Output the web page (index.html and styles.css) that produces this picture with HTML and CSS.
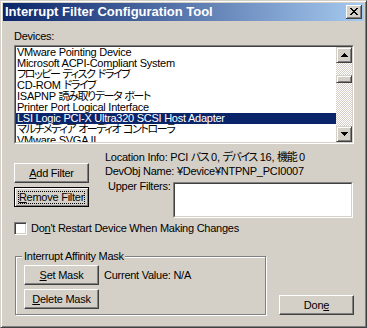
FILE: index.html
```html
<!DOCTYPE html>
<html lang="ja">
<head>
<meta charset="utf-8">
<title>Interrupt Filter Configuration Tool</title>
<link rel="stylesheet" href="styles.css">
</head>
<body>
<div class="window">
  <div class="titlebar">
    <span class="title">Interrupt Filter Configuration Tool</span>
    <span class="close"><svg width="8" height="7" viewBox="0 0 8 7" shape-rendering="crispEdges"><path d="M0 0h2v1H0zM6 0h2v1H6zM1 1h2v1H1zM5 1h2v1H5zM2 2h4v1H2zM3 3h2v1H3zM2 4h4v1H2zM1 5h2v1H1zM5 5h2v1H5zM0 6h2v1H0zM6 6h2v1H6z" fill="#000"/></svg></span>
  </div>
  <div class="client">
    <div class="label">Devices:</div>
    <div class="listbox">
      <div class="listbox-inner">
        <div class="items">
          <div class="item">VMware Pointing Device</div>
          <div class="item">Microsoft ACPI-Compliant System</div>
          <div class="item"><span class="ja">フロッピー</span> <span class="ja">ディスク</span> <span class="ja">ドライブ</span></div>
          <div class="item">CD-ROM <span class="ja">ドライブ</span></div>
          <div class="item">ISAPNP <span class="ja">読み取りデータ</span> <span class="ja">ポート</span></div>
          <div class="item">Printer Port Logical Interface</div>
          <div class="item selected">LSI Logic PCI-X Ultra320 SCSI Host Adapter</div>
          <div class="item"><span class="ja">マルチメディア</span> <span class="ja">オーディオ</span> <span class="ja">コントローラ</span></div>
          <div class="item">VMware SVGA II</div>
        </div>
        <div class="vscroll">
          <div class="sbtn"><svg width="7" height="4" viewBox="0 0 7 4" shape-rendering="crispEdges"><path d="M3 0h1v1H3zM2 1h3v1H2zM1 2h5v1H1zM0 3h7v1H0z" fill="#000"/></svg></div>
          <div class="track"><div class="thumb"></div></div>
          <div class="sbtn"><svg width="7" height="4" viewBox="0 0 7 4" shape-rendering="crispEdges"><path d="M0 0h7v1H0zM1 1h5v1H1zM2 2h3v1H2zM3 3h1v1H3z" fill="#000"/></svg></div>
        </div>
      </div>
    </div>
    <div class="mid">
      <div class="btncol">
        <button class="btn"><span class="cap"><u>A</u>dd Filter</span></button>
        <button class="btn focused"><span class="cap"><u>R</u>emove Filter</span></button>
      </div>
      <div class="info">
        <div class="line">Location Info: PCI <span class="ja">バス</span> 0, <span class="ja">デバイス</span> 16, <span class="ja">機能</span> 0</div>
        <div class="line">DevObj Name: ¥Device¥NTPNP_PCI0007</div>
        <div class="upper">
          <span class="upper-label">Upper Filters:</span>
          <div class="field"><div class="field-inner"></div></div>
        </div>
      </div>
    </div>
    <div class="check">
      <span class="box"></span>
      <span class="check-label">Do<u>n</u>'t Restart Device When Making Changes</span>
    </div>
    <div class="bottom">
      <div class="group">
        <span class="group-title">Interrupt Affinity Mask</span>
        <div class="grow">
          <button class="btn"><span class="cap"><u>S</u>et Mask</span></button>
          <span class="current">Current Value: N/A</span>
        </div>
        <button class="btn"><span class="cap"><u>D</u>elete Mask</span></button>
      </div>
      <button class="btn"><span class="cap">Don<u>e</u></span></button>
    </div>
  </div>
</div>
</body>
</html>
```

FILE: styles.css
```css
* { box-sizing: border-box; margin: 0; padding: 0; }
html, body { width: 367px; height: 328px; overflow: hidden; background: #d4d0c8; }
body {
  font-family: "Liberation Sans", Arial, "Noto Sans CJK JP", sans-serif;
  font-size: 11px;
  color: #000;
  letter-spacing: -0.25px;
  font-feature-settings: "palt";
}
u { text-underline-offset: 1px; }
.ja { letter-spacing: -1.4px; }

.window {
  width: 367px;
  height: 328px;
  border: 1px solid;
  border-color: #d4d0c8 #404040 #404040 #d4d0c8;
  box-shadow: inset 1px 1px #fff, inset -1px -1px #808080;
  padding: 2px;
  display: flex;
  flex-direction: column;
}

.titlebar {
  height: 18px;
  flex: none;
  background: linear-gradient(to right, #0a246a, #a6caf0);
  display: flex;
  align-items: center;
  justify-content: space-between;
  padding: 0 2px 0 2px;
}
.title {
  color: #fff;
  font-weight: bold;
  font-size: 13px;
  letter-spacing: 0;
  line-height: 18px;
  white-space: nowrap;
}
.close {
  width: 16px;
  height: 14px;
  background: #d4d0c8;
  box-shadow: inset -1px -1px #404040, inset 1px 1px #fff, inset -2px -2px #808080;
  display: block;
  padding: 3px 0 0 4px;
}
.close svg { display: block; }

.client {
  padding: 9px 10px 0 11px;
  display: flex;
  flex-direction: column;
}
.label { line-height: 13px; }

.listbox {
  margin-top: 2px;
  width: 340px;
  height: 99px;
  border: 1px solid;
  border-color: #808080 #fff #fff #808080;
}
.listbox-inner {
  height: 100%;
  border: 1px solid;
  border-color: #404040 #d4d0c8 #d4d0c8 #404040;
  background: #fff;
  display: flex;
}
.items { flex: 1; overflow: hidden; }
.item {
  height: 11px;
  line-height: 11px;
  padding-left: 1px;
  white-space: nowrap;
  overflow: hidden;
}
.item.selected { background: #0a246a; color: #fff; }

.vscroll {
  width: 16px;
  flex: none;
  display: flex;
  flex-direction: column;
}
.sbtn, .thumb {
  background: #d4d0c8;
  border: 1px solid;
  border-color: #d4d0c8 #404040 #404040 #d4d0c8;
  box-shadow: inset 1px 1px #fff, inset -1px -1px #808080;
}
.sbtn {
  height: 16px;
  flex: none;
  display: flex;
  align-items: center;
  justify-content: center;
}
.sbtn svg { display: block; }
.track {
  flex: 1;
  background: repeating-conic-gradient(#fff 0 25%, #d4d0c8 0 50%) 0 0 / 2px 2px;
}
.thumb { height: 8px; margin-top: 12px; }

.mid { display: flex; margin-top: 6px; }
.btncol {
  width: 75px;
  flex: none;
  display: flex;
  flex-direction: column;
  gap: 4px;
  padding-top: 13px;
}
.info { margin-left: 16px; flex: 1; }
.line { line-height: 14px; white-space: nowrap; }
.upper { display: flex; margin-top: 4px; }
.upper-label { line-height: 13px; margin-top: -2px; margin-left: 3px; white-space: nowrap; }
.field {
  width: 180px;
  height: 36px;
  margin-left: auto;
  margin-right: 1px;
  border: 1px solid;
  border-color: #808080 #fff #fff #808080;
}
.field-inner {
  height: 100%;
  border: 1px solid;
  border-color: #404040 #d4d0c8 #d4d0c8 #404040;
  background: #fff;
}

.btn {
  width: 75px;
  height: 20px;
  flex: none;
  background: #d4d0c8;
  border: 1px solid;
  border-color: #fff #404040 #404040 #fff;
  box-shadow: inset -1px -1px #808080;
  font: inherit;
  letter-spacing: inherit;
  color: #000;
  display: flex;
  align-items: center;
  justify-content: center;
  line-height: 13px;
}
.cap { white-space: nowrap; }
.btn.focused {
  border-color: #000;
  box-shadow: inset 1px 1px #fff, inset -1px -1px #808080;
  padding: 3px 3px 2px 3px;
}
.btn.focused .cap {
  flex: 1;
  align-self: stretch;
  border: 1px dotted #000;
  display: flex;
  align-items: center;
  justify-content: center;
}

.check { display: flex; margin-top: 4px; align-items: center; }
.box {
  width: 13px;
  height: 13px;
  flex: none;
  background: #fff;
  border: 1px solid;
  border-color: #808080 #fff #fff #808080;
  box-shadow: inset 1px 1px #404040, inset -1px -1px #d4d0c8;
}
.check-label { margin-left: 4px; line-height: 13px; white-space: nowrap; }

.bottom {
  display: flex;
  justify-content: space-between;
  align-items: flex-end;
  margin-top: 21px;
}
.group {
  position: relative;
  width: 251px;
  height: 59px;
  margin-left: 1px;
  border: 1px solid #808080;
  box-shadow: inset 1px 1px #fff, 1px 1px 0 #fff;
  padding: 8px 0 0 8px;
  display: flex;
  flex-direction: column;
  gap: 4px;
}
.group-title {
  position: absolute;
  top: -7px;
  left: 6px;
  padding: 0 1px 0 2px;
  background: #d4d0c8;
  line-height: 13px;
  white-space: nowrap;
}
.grow { display: flex; align-items: center; }
.current { margin-left: 5px; white-space: nowrap; }
```
